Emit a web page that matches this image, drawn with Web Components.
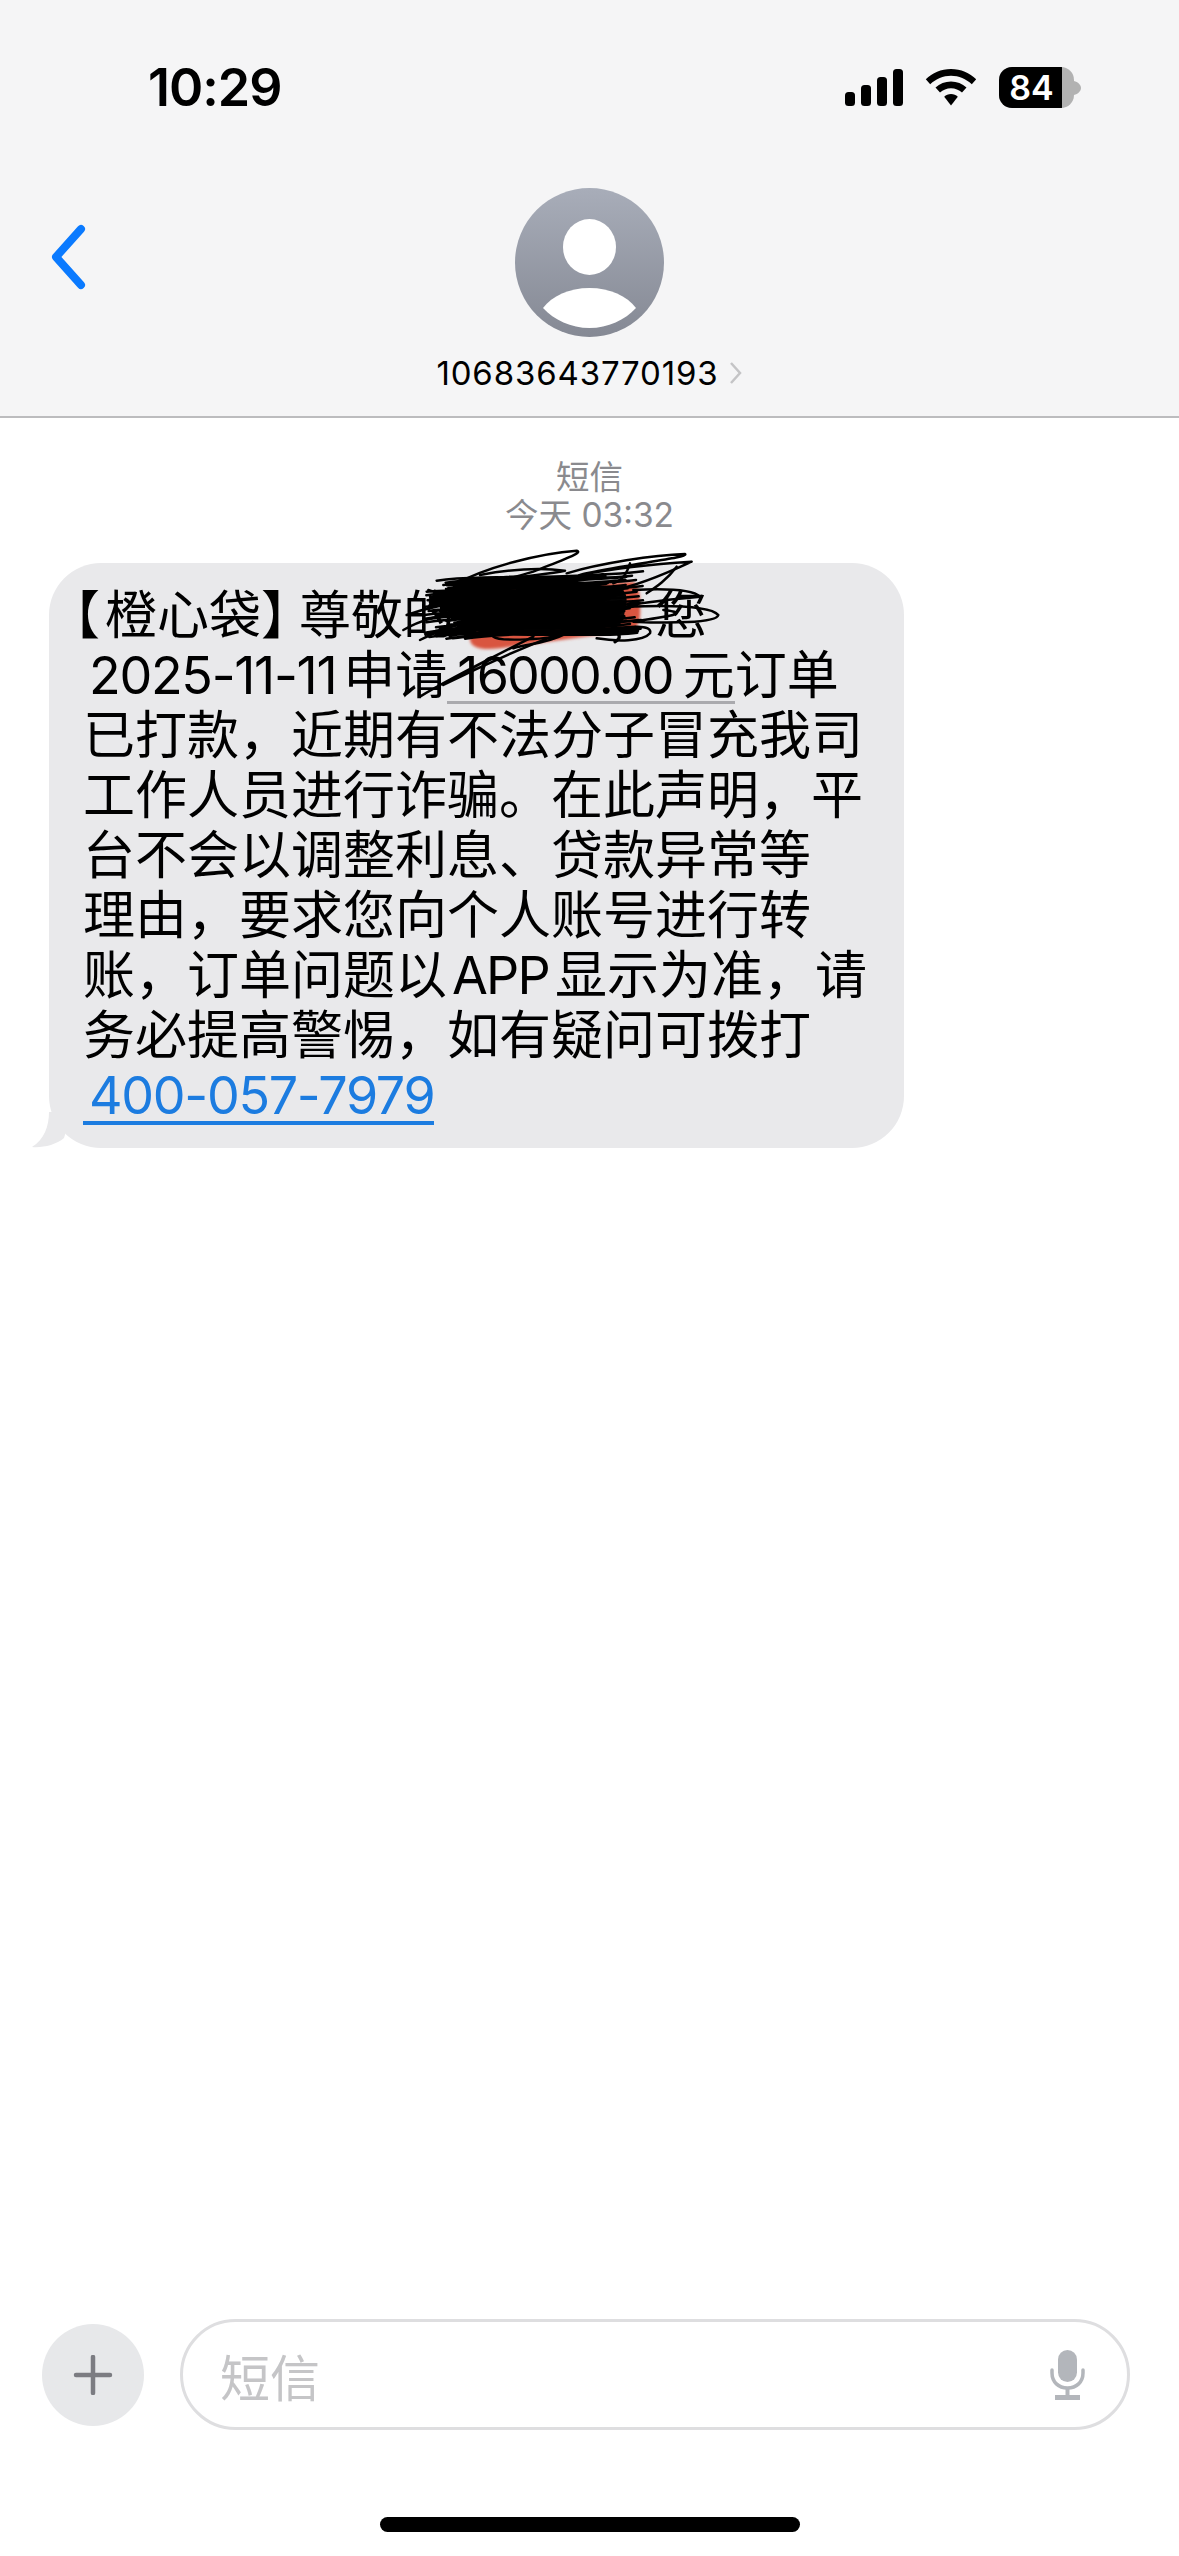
<!DOCTYPE html>
<html lang="zh">
<head>
<meta charset="utf-8">
<title>短信</title>
<style>
  html, body { margin: 0; padding: 0; background: #fff; }
  body { width: 1179px; height: 2556px; overflow: hidden; font-family: Inter, "Noto Sans CJK SC", sans-serif; }
  sms-screen { height: 2556px; }
</style>
</head>
<body>
<sms-screen>
  <sms-header slot="header" number="10683643770193" time="10:29" battery="84"></sms-header>
  <sms-stamp slot="stamp" kind="短信" when="今天 03:32"></sms-stamp>
  <sms-bubble slot="bubble"></sms-bubble>
  <sms-composer slot="composer" placeholder="短信"></sms-composer>
</sms-screen>

<script>
class SmsScreen extends HTMLElement {
  constructor() {
    super();
    this.attachShadow({ mode: "open" });
  }
  connectedCallback() {
    this.shadowRoot.innerHTML = `
    <style>
      :host { display: flex; flex-direction: column; width: 1179px; background: #fff; }
      .thread { flex: 1; display: flex; flex-direction: column; }
    </style>
    <slot name="header"></slot>
    <div class="thread">
      <slot name="stamp"></slot>
      <slot name="bubble"></slot>
    </div>
    <slot name="composer"></slot>
    `;
  }
}

class SmsHeader extends HTMLElement {
  constructor() {
    super();
    this.attachShadow({ mode: "open" });
  }
  connectedCallback() {
    const number = this.getAttribute("number");
    const time = this.getAttribute("time");
    const battery = this.getAttribute("battery");
    this.shadowRoot.innerHTML = `
    <style>
      :host { display: block; height: 418px; box-sizing: border-box; background: #f5f5f6; border-bottom: 2px solid #bcbcbe; }
      .status { height: 188px; box-sizing: border-box; padding: 58px 98px 0 148px; display: flex; justify-content: space-between; align-items: flex-start; }
      .time { font: 600 52px/60px Inter, sans-serif; color: #000; letter-spacing: -1px; }
      .icons { display: flex; align-items: center; gap: 22px; padding-top: 9px; }
      .battery { position: relative; width: 75px; height: 41px; border-radius: 13px; overflow: hidden; background: #b2b2b2; }
      .battery i { position: absolute; left: 0; top: 0; bottom: 0; width: 63px; background: #000; }
      .battery span { position: relative; display: block; width: 63px; text-align: center; padding-left: 1px; font: 600 34px/41px Inter, sans-serif; color: #fff; }
      .cell { display: flex; align-items: center; }
      .nub { width: 7px; height: 14px; }
      .contact { position: relative; display: flex; flex-direction: column; align-items: center; }
      .back { position: absolute; left: 47px; top: 35px; }
      .avatar { display: block; }
      .number { display: flex; align-items: center; gap: 10px; margin-top: 14px; font: 400 33px/44px Inter, sans-serif; letter-spacing: 0.85px; color: #000; }
    </style>
    <div class="status">
      <div class="time">${time}</div>
      <div class="icons">
        <svg width="58" height="37" viewBox="0 0 58 37">
          <rect x="0" y="23" width="10" height="14" rx="3.5"/>
          <rect x="16" y="16" width="10" height="21" rx="3.5"/>
          <rect x="32" y="8" width="10" height="29" rx="3.5"/>
          <rect x="48" y="0" width="10" height="37" rx="3.5"/>
        </svg>
        <svg width="52" height="37" viewBox="0 0 52 37">
          <path d="M26 0C16 0 7.500 3.800 0.800 10.200L5.200 15.200C11 9.800 18 6.700 26 6.700S41 9.800 46.800 15.200L51.200 10.200C44.500 3.800 36 0 26 0Z"/>
          <path d="M26 12.500C20 12.500 14.800 14.800 10.500 18.600L15 23.600C18 21 21.800 19.300 26 19.300S34 21 37 23.600L41.500 18.600C37.200 14.800 32 12.500 26 12.500Z"/>
          <path d="M26 25C23.300 25 21 26 19.200 27.700L26 36.500L32.800 27.700C31 26 28.700 25 26 25Z"/>
        </svg>
        <div class="cell">
          <div class="battery"><i></i><span>${battery}</span></div>
          <svg class="nub" viewBox="0 0 7 14"><path d="M0 0C4 1 7 4 7 7S4 13 0 14Z" fill="#b2b2b2"/></svg>
        </div>
      </div>
    </div>
    <div class="contact">
      <svg class="back" width="42" height="68" viewBox="0 0 42 68">
        <path d="M34 6L9 34L34 62" fill="none" stroke="#0a7aff" stroke-width="8" stroke-linecap="round" stroke-linejoin="round"/>
      </svg>
      <svg class="avatar" width="149" height="149" viewBox="0 0 149 149">
        <defs>
          <linearGradient id="av" x1="0" y1="0" x2="0" y2="1">
            <stop offset="0" stop-color="#a8adb9"/>
            <stop offset="1" stop-color="#858994"/>
          </linearGradient>
        </defs>
        <circle cx="74.500" cy="74.500" r="74.500" fill="url(#av)"/>
        <ellipse cx="74.500" cy="59" rx="26.500" ry="28" fill="#fff"/>
        <path d="M28 120C37 108 54 100 74.500 100S112 108 121 120C110 132 93 140 74.500 140S39 132 28 120Z" fill="#fff"/>
      </svg>
      <div class="number">${number}
        <svg width="14" height="24" viewBox="0 0 14 24"><path d="M2 2L11 12L2 22" fill="none" stroke="#c4c4c6" stroke-width="2.500"/></svg>
      </div>
    </div>
    `;
  }
}

class SmsStamp extends HTMLElement {
  constructor() {
    super();
    this.attachShadow({ mode: "open" });
  }
  connectedCallback() {
    this.shadowRoot.innerHTML = `
    <style>
      :host { display: block; padding-top: 40px; text-align: center; color: #8a8a8e; font: 400 33.500px/38px Inter, "Noto Sans CJK SC", sans-serif; }
      div { height: 38px; }
    </style>
    <div>${this.getAttribute("kind")}</div>
    <div>${this.getAttribute("when")}</div>
    `;
  }
}

class SmsBubble extends HTMLElement {
  constructor() {
    super();
    this.attachShadow({ mode: "open" });
  }
  // dense pen strokes for the redaction, same seed every time
  scrawl() {
    let seed = 7;
    const rnd = () => {
      seed = (seed * 16807) % 2147483647;
      return seed / 2147483647;
    };
    let d = "";
    for (let i = 0; i < 90; i++) {
      const y0 = 150 + (i % 18) * 10 + rnd() * 8;
      const x0 = 70 + rnd() * 170;
      const x1 = 560 + rnd() * 170;
      const y1 = y0 - 12 - rnd() * 22;
      d += `M${x0.toFixed(0)} ${y0.toFixed(0)}C${(x0 + 150).toFixed(0)} ${(y0 - 24).toFixed(0)} ${(x1 - 150).toFixed(0)} ${(y1 + 20).toFixed(0)} ${x1.toFixed(0)} ${y1.toFixed(0)}`;
    }
    return d;
  }
  connectedCallback() {
    this.shadowRoot.innerHTML = `
    <style>
      :host { display: block; padding: 29px 0 0 49px; }
      .bubble { position: relative; width: 855px; height: 585px; box-sizing: border-box; padding: 23px 0 0 34px; border-radius: 52px; background: #e9e9eb; color: #000; font: 400 52px/60px Inter, "Noto Sans CJK SC", sans-serif; }
      .line { height: 60px; white-space: nowrap; }
      .open { font-feature-settings: "halt"; margin-left: -9px; margin-right: 5px; }
      .close { font-feature-settings: "halt"; margin-right: 12px; }
      .gap { display: inline-block; width: 200px; }
      .num { padding-left: 6px; padding-right: 7px; letter-spacing: -1.300px; }
      .amount { display: inline-block; height: 51px; line-height: 52px; padding-left: 10px; border-bottom: 3px solid #aaaaae; }
      .amount b { font-weight: 400; letter-spacing: -1.800px; padding-right: 10px; }
      .app { padding: 0 6px 0 5px; letter-spacing: -1.800px; }
      a { display: inline-block; height: 51px; line-height: 52px; padding-left: 6px; color: #1c7ce0; text-decoration: none; letter-spacing: -1.300px; border-bottom: 4px solid #1c7ce0; }
      .tail { position: absolute; left: -17px; bottom: 0; }
      .scribble { position: absolute; left: 351px; top: -33px; }
    </style>
    <div class="bubble">
      <svg class="tail" width="40" height="36" viewBox="0 0 40 36"><path d="M17 0C17 14 12 28 0 35C10 36 24 33 32 26L40 0Z" fill="#e9e9eb"/></svg>
      <div class="line"><span class="open">【</span>橙心袋<span class="close">】</span>尊敬的<span class="gap"></span>您</div>
      <div class="line"><span class="num">2025-11-11</span>申请<span class="amount"><b>16000.00</b>元</span>订单</div>
      <div class="line">已打款，近期有不法分子冒充我司</div>
      <div class="line">工作人员进行诈骗。在此声明，平</div>
      <div class="line">台不会以调整利息、贷款异常等</div>
      <div class="line">理由，要求您向个人账号进行转</div>
      <div class="line">账，订单问题以<span class="app">APP</span>显示为准，请</div>
      <div class="line">务必提高警惕，如有疑问可拨打</div>
      <div class="line"><a href="#">400-057-7979</a></div>
      <svg class="scribble" width="320" height="190" viewBox="0 0 960 570">
        <defs><filter id="soft"><feGaussianBlur stdDeviation="4"/></filter></defs>
        <path d="M215 180L700 155Q725 170 720 260Q715 290 700 300L300 355Q215 365 210 330Z" fill="#d9553f" filter="url(#soft)"/>
        <path d="M225 215Q225 195 250 193L650 175Q680 178 680 210L670 270Q660 290 630 292L260 310Q225 312 222 285Z" fill="#050505"/>
        <g fill="none" stroke="#000" stroke-width="7.500" stroke-linecap="round" stroke-linejoin="round">
          <path d="${this.scrawl()}"/>
          <path d="M160 165C260 110 420 70 530 62C550 68 500 85 400 125C320 150 220 170 130 190"/>
          <path d="M240 135C320 120 420 112 495 122C430 135 340 140 270 160C360 150 450 150 520 155"/>
          <path d="M500 130C600 100 760 75 855 72C870 82 700 100 560 130C480 150 620 110 875 95C800 130 700 170 640 180"/>
          <path d="M690 100C680 130 670 150 640 160M830 110C800 150 770 170 740 190"/>
          <path d="M700 180C800 175 880 180 900 200C790 210 700 220 680 230C800 225 930 225 955 255C950 280 800 280 700 275C800 260 880 250 790 240"/>
          <path d="M80 185C200 175 300 180 450 170M90 200C170 190 240 190 300 195M85 180C150 200 130 210 100 215"/>
          <path d="M10 300C60 270 140 250 220 240M60 330C120 300 170 280 240 270M20 255C100 225 170 220 240 210"/>
          <path d="M60 500C140 450 260 390 400 320C300 370 170 440 130 465C220 420 350 360 480 310"/>
          <path d="M580 300C680 290 760 280 750 310C730 335 650 335 590 325"/>
          <path d="M280 320C300 335 450 330 500 310C430 345 380 340 340 355"/>
          <path d="M640 300C660 310 665 325 645 335" stroke-width="10"/>
        </g>
      </svg>
    </div>
    `;
  }
}

class SmsComposer extends HTMLElement {
  constructor() {
    super();
    this.attachShadow({ mode: "open" });
  }
  connectedCallback() {
    this.shadowRoot.innerHTML = `
    <style>
      :host { display: block; padding: 0 49px 24px 42px; }
      .bar { display: flex; align-items: center; gap: 36px; }
      .plus { width: 102px; height: 102px; border-radius: 50%; background: #e7e8ea; display: flex; align-items: center; justify-content: center; flex: none; }
      .field { flex: 1; height: 111px; box-sizing: border-box; border: 3px solid #dedee0; border-radius: 56px; display: flex; align-items: center; justify-content: space-between; padding: 0 42px 0 37px; color: #c5c5c7; font: 400 50px/60px "Noto Sans CJK SC", sans-serif; }
      .home { width: 420px; height: 15px; border-radius: 8px; background: #000; margin: 87px auto 0; transform: translateX(4px); }
    </style>
    <div class="bar">
      <div class="plus">
        <svg width="40" height="40" viewBox="0 0 40 40"><path d="M20 2V38M3 20H37" stroke="#7c7c82" stroke-width="4.500" stroke-linecap="round"/></svg>
      </div>
      <div class="field">
        <span>${this.getAttribute("placeholder")}</span>
        <svg width="35" height="50" viewBox="0 0 35 50">
          <rect x="8" y="0" width="19" height="32" rx="9.500" fill="#b3b6bb"/>
          <path d="M2 20V23C2 32 8.500 38 17.500 38S33 32 33 23V20" fill="none" stroke="#b3b6bb" stroke-width="3.500" stroke-linecap="round"/>
          <path d="M17.500 38V46" stroke="#b3b6bb" stroke-width="4"/>
          <rect x="5" y="45" width="25" height="5" fill="#b3b6bb"/>
        </svg>
      </div>
    </div>
    <div class="home"></div>
    `;
  }
}

customElements.define("sms-screen", SmsScreen);
customElements.define("sms-header", SmsHeader);
customElements.define("sms-stamp", SmsStamp);
customElements.define("sms-bubble", SmsBubble);
customElements.define("sms-composer", SmsComposer);
</script>
</body>
</html>
